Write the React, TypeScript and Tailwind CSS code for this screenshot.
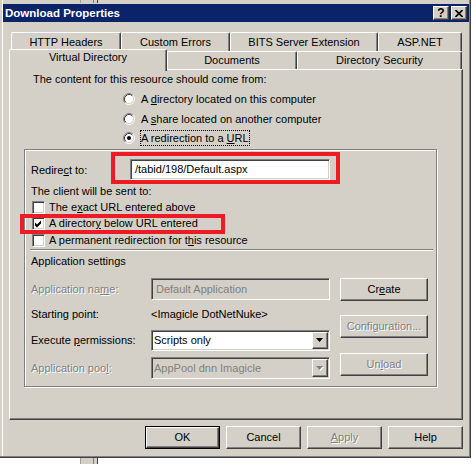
import React from "react";

// classic 3D edges
const raised =
  "border border-t-white border-l-white border-r-[#404040] border-b-[#404040] shadow-[inset_-1px_-1px_0_#808080]";
const sunken =
  "border border-t-[#808080] border-l-[#808080] border-r-white border-b-white shadow-[inset_1px_1px_0_#404040,inset_-1px_-1px_0_#d4d0c8]";
const etched = "text-[#808080] [text-shadow:1px_1px_0_#fff]";

function Button({
  children,
  className = "",
  disabled = false,
}: {
  children: React.ReactNode;
  className?: string;
  disabled?: boolean;
}) {
  return (
    <div
      className={`flex items-center justify-center bg-[#d4d0c8] ${raised} ${disabled ? etched : ""} ${className}`}
    >
      {children}
    </div>
  );
}

function CaptionButton({ children }: { children: React.ReactNode }) {
  return (
    <div className={`w-[16px] h-[14px] bg-[#d4d0c8] flex items-center justify-center ${raised}`}>
      {children}
    </div>
  );
}

function Radio({ checked = false }: { checked?: boolean }) {
  return (
    <svg width="12" height="12" viewBox="0 0 12 12" className="shrink-0">
      <circle cx="6" cy="6" r="4.5" fill="#fff" />
      <path d="M2.11 9.89 A5.5 5.5 0 0 1 9.89 2.11" stroke="#808080" fill="none" />
      <path d="M9.89 2.11 A5.5 5.5 0 0 1 2.11 9.89" stroke="#fff" fill="none" />
      <path d="M2.82 9.18 A4.5 4.5 0 0 1 9.18 2.82" stroke="#404040" fill="none" />
      <path d="M9.18 2.82 A4.5 4.5 0 0 1 2.82 9.18" stroke="#d4d0c8" fill="none" />
      {checked && <circle cx="6" cy="6" r="2" fill="#000" />}
    </svg>
  );
}

function Checkbox({ checked = false }: { checked?: boolean }) {
  return (
    <div className={`w-[13px] h-[13px] shrink-0 bg-white ${sunken}`}>
      {checked && (
        <svg width="11" height="11" viewBox="0 0 11 11" className="block">
          <path d="M2 4.5 L4 6.5 L8 2.5 L8 5.5 L4 9.5 L2 7.5 Z" fill="#000" />
        </svg>
      )}
    </div>
  );
}

function DropArrow({ disabled = false }: { disabled?: boolean }) {
  return (
    <svg width="8" height="5" viewBox="0 0 8 5">
      {disabled && <path d="M1 1 H8 L4.5 5 Z" fill="#fff" />}
      <path d="M0 0 H7 L3.5 4 Z" fill={disabled ? "#808080" : "#000"} />
    </svg>
  );
}

function Select({ value, disabled = false, h }: { value: string; disabled?: boolean; h: string }) {
  return (
    <div
      className={`flex w-[179px] ${h} p-[1px] ${sunken} ${disabled ? "bg-[#d4d0c8] text-[#808080]" : "bg-white"}`}
    >
      <div className="flex-1 flex items-center pl-[1px]">{value}</div>
      <div className={`w-[16px] h-full flex items-center justify-center bg-[#d4d0c8] ${raised}`}>
        <DropArrow disabled={disabled} />
      </div>
    </div>
  );
}

function Tab({ label, w, h, selected = false }: { label: string; w: string; h: string; selected?: boolean }) {
  return (
    <div
      className={`${w} ${h} shrink-0 bg-[#d4d0c8] border-t border-l border-r border-t-white border-l-white border-r-[#404040] shadow-[inset_-1px_0_0_#808080] rounded-t-[2px] flex justify-center ${
        selected ? "items-start pt-[1px] -mb-[2px]" : "items-center"
      }`}
    >
      {label}
    </div>
  );
}

export default function App() {
  return (
    <div className="relative w-[476px] h-[464px] bg-white overflow-hidden font-['Liberation_Sans',Arial,sans-serif] text-[11px] leading-[13px] text-black">
      <div className="w-[471px] h-[458px] bg-[#d4d0c8] pl-[3px] pt-[4px] shadow-[inset_-1px_-1px_0_#404040,inset_-2px_-2px_0_#808080,inset_2px_0_0_#d4d0c8,inset_3px_0_0_#fff]">
        {/* title bar */}
        <div className="w-[466px] h-[18px] bg-[#0a246a] flex items-center justify-between pl-[2px] pr-[2px]">
          <span className="text-white font-bold text-[11.5px]">Download Properties</span>
          <div className="flex gap-[2px]">
            <CaptionButton>
              <span className="font-bold text-[12px] leading-none">?</span>
            </CaptionButton>
            <CaptionButton>
              <svg width="8" height="7" viewBox="0 0 8 7">
                <path d="M0.5 0 L7.5 7 M7.5 0 L0.5 7" stroke="#000" strokeWidth="1.6" />
              </svg>
            </CaptionButton>
          </div>
        </div>

        <div className="ml-[6px] mt-[10px] w-[454px]">
          {/* back tab row */}
          <div className="flex h-[19px] pl-[2px]">
            <Tab label="HTTP Headers" w="w-[110px]" h="h-[19px]" />
            <Tab label="Custom Errors" w="w-[109px]" h="h-[19px]" />
            <Tab label="BITS Server Extension" w="w-[148px]" h="h-[19px]" />
            <Tab label="ASP.NET" w="w-[84px]" h="h-[19px]" />
          </div>
          {/* front tab row */}
          <div className="relative z-10 flex items-end h-[20px] -mt-[2px]">
            <Tab label="Virtual Directory" w="w-[158px]" h="h-[22px]" selected />
            <Tab label="Documents" w="w-[130px]" h="h-[18px]" />
            <Tab label="Directory Security" w="w-[165px]" h="h-[18px]" />
          </div>

          {/* tab page */}
          <div className="w-[454px] h-[351px] border border-t-white border-l-white border-r-[#404040] border-b-[#404040] shadow-[inset_-1px_-1px_0_#808080] flex flex-col">
            <div className="mt-[3px] ml-[23px] h-[13px]">The content for this resource should come from:</div>
            <div className="mt-[5px] ml-[113px] h-[16px] flex items-center gap-[6px]">
              <Radio />
              <span>
                A <u>d</u>irectory located on this computer
              </span>
            </div>
            <div className="mt-[4px] ml-[113px] h-[16px] flex items-center gap-[6px]">
              <Radio />
              <span>
                A <u>s</u>hare located on another computer
              </span>
            </div>
            <div className="mt-[3px] ml-[113px] h-[16px] flex items-center gap-[5px]">
              <Radio checked />
              <span className="inline-block h-[16px] leading-[16px] px-[1px] outline outline-1 outline-dotted outline-black -outline-offset-1">
                A redirection to a <u>U</u>RL
              </span>
            </div>

            {/* redirect frame */}
            <div className="mt-[3px] ml-[14px] w-[413px] h-[238px] border border-[#808080] shadow-[inset_1px_1px_0_#fff,1px_1px_0_#fff] flex flex-col">
              <div className="mt-[2px] pl-[6px] flex items-start">
                <div className="w-[80px] pt-[12px]">
                  Redire<u>c</u>t to:
                </div>
                <div className="w-[229px] h-[32px] border-4 border-[#ed1c24] pl-[15px] pt-[3px]">
                  <div className={`w-[200px] h-[21px] bg-white flex items-center pl-[4px] ${sunken}`}>
                    /tabid/198/Default.aspx
                  </div>
                </div>
              </div>
              <div className="mt-[1px] pl-[6px] h-[13px]">The client will be sent to:</div>
              <div className="mt-[2px] pl-[7px] h-[15px] flex items-center gap-[4px]">
                <Checkbox />
                <span>
                  The e<u>x</u>act URL entered above
                </span>
              </div>
              <div className="relative mt-[1px] pl-[7px] h-[15px] flex items-center gap-[4px]">
                <Checkbox checked />
                <span>
                  A director<u>y</u> below URL entered
                </span>
                <div className="absolute left-[-5px] top-[-2px] w-[205px] h-[20px] border-4 border-[#ed1c24]" />
              </div>
              <div className="mt-[2px] pl-[7px] h-[15px] flex items-center gap-[4px]">
                <Checkbox />
                <span>
                  A permanent redirection for t<u>h</u>is resource
                </span>
              </div>
              <div className="mt-[1px] ml-[5px] w-[403px] h-[2px] border-t border-t-[#808080] border-b border-b-white" />
              <div className="mt-[4px] pl-[6px] h-[13px]">Application settings</div>

              <div className="mt-[10px] pl-[6px] flex">
                <div className="w-[299px] flex flex-col">
                  <div className="h-[22px] flex items-center">
                    <div className={`w-[120px] ${etched}`}>
                      Application na<u>m</u>e:
                    </div>
                    <div className={`w-[179px] h-[22px] flex items-center pl-[4px] text-[#808080] ${sunken}`}>
                      Default Application
                    </div>
                  </div>
                  <div className="mt-[7px] h-[14px] flex items-center">
                    <div className="w-[120px]">Starting point:</div>
                    <div>&lt;Imagicle DotNetNuke&gt;</div>
                  </div>
                  <div className="mt-[9px] h-[21px] flex items-center">
                    <div className="w-[120px]">
                      Execute <u>p</u>ermissions:
                    </div>
                    <Select value="Scripts only" h="h-[21px]" />
                  </div>
                  <div className="mt-[6px] h-[22px] flex items-center">
                    <div className={`w-[120px] ${etched}`}>
                      Application poo<u>l</u>:
                    </div>
                    <Select value="AppPool dnn Imagicle" h="h-[22px]" disabled />
                  </div>
                </div>
                <div className="ml-[10px] flex flex-col">
                  <Button className="w-[88px] h-[23px]">
                    <span>
                      Cr<u>e</u>ate
                    </span>
                  </Button>
                  <Button className="mt-[14px] w-[88px] h-[23px]" disabled>
                    <span>
                      Confi<u>g</u>uration...
                    </span>
                  </Button>
                  <Button className="mt-[15px] w-[88px] h-[23px]" disabled>
                    <span>
                      Un<u>l</u>oad
                    </span>
                  </Button>
                </div>
              </div>
            </div>
          </div>

          {/* dialog buttons */}
          <div className="mt-[6px] flex justify-end gap-[6px]">
            <div className="w-[75px] h-[23px] border border-black flex">
              <Button className="flex-1">OK</Button>
            </div>
            <Button className="w-[75px] h-[23px]">Cancel</Button>
            <Button className="w-[75px] h-[23px]" disabled>
              <span>
                <u>A</u>pply
              </span>
            </Button>
            <Button className="w-[75px] h-[23px]">Help</Button>
          </div>
        </div>
      </div>
      {/* edge of the window behind, showing above and below */}
      <div className="absolute left-[80px] top-0 h-[3px] flex">
        <div className="w-[13px] h-full bg-[#d4d0c8] border-l border-l-[#a0a0a0]" />
        <div className="w-[1px] h-full bg-[#808080]" />
        <div className="w-[3px] h-full bg-[#d4d0c8]" />
        <div className="w-[1px] h-full bg-[#404040]" />
      </div>
      <div className="h-[6px] pl-[80px] flex">
        <div className="w-[13px] h-full bg-[#d4d0c8] border-l border-l-[#a0a0a0]" />
        <div className="w-[1px] h-full bg-[#808080]" />
        <div className="w-[3px] h-full bg-[#d4d0c8]" />
        <div className="w-[1px] h-full bg-[#404040]" />
      </div>
    </div>
  );
}
